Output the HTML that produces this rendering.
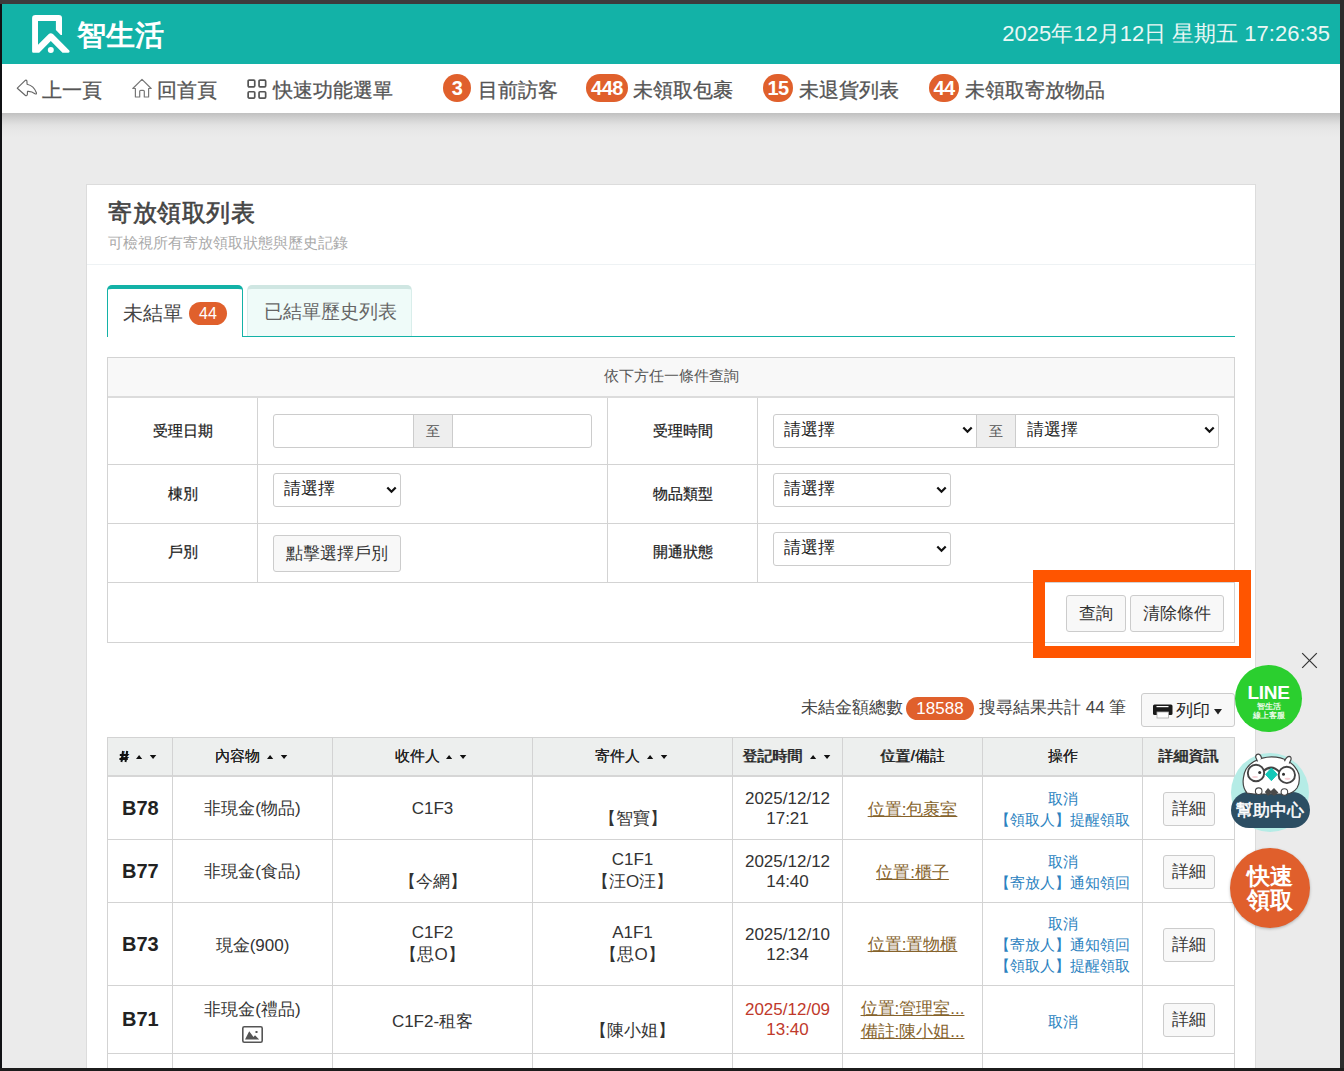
<!DOCTYPE html>
<html><head><meta charset="utf-8">
<style>
*{box-sizing:border-box;margin:0;padding:0}
html,body{width:1344px;height:1071px;overflow:hidden}
body{position:relative;background:#2c2c2c;font-family:"Liberation Sans",sans-serif;color:#333}
.a{position:absolute;white-space:nowrap}
#page{position:absolute;left:2px;top:4px;width:1338px;height:1064px;background:#ebebeb;overflow:hidden}
#hdr{left:2px;top:4px;width:1338px;height:60px;background:#13b2a7}
#nav{left:2px;top:64px;width:1338px;height:49px;background:#fff}
#shadow{left:2px;top:113px;width:1338px;height:24px;background:linear-gradient(#c0c0c0,#cfcfcf 20%,#e2e2e2 50%,#e8e8e8 75%,#ebebeb)}
.navt{font-size:20px;line-height:26px;color:#555;-webkit-text-stroke:0.3px #555}
.badge{background:#e0602c;color:#fff;font-weight:bold;font-size:20px;text-align:center;border-radius:14px;height:28px;line-height:28px;letter-spacing:-0.5px}
#card{left:86px;top:184px;width:1170px;height:900px;background:#fff;border:1px solid #dcdcdc}
.ln{position:absolute;background:#d3d3d3}
.lbl{font-size:15px;color:#222;-webkit-text-stroke:0.25px #222;text-align:center;line-height:20px}
.inp{border:1px solid #ccc;border-radius:3px;background:#fff}
.sel{font-size:17px;color:#222;line-height:20px}
.btn{border:1px solid #ccc;border-radius:3px;background:#f8f8f8;font-size:17px;color:#333;text-align:center}
.th{font-size:15px;font-weight:500;color:#222;line-height:20px;text-align:center}
.td{font-size:17px;color:#333;line-height:20px;text-align:center}
.lnk{font-size:15px;color:#2b82c0;line-height:21px;text-align:center}
.pos{font-size:17px;color:#86632c;text-decoration:underline;line-height:20px;text-align:center}
</style></head><body>
<div id="page"></div>
<div id="hdr" class="a"></div>
<div id="nav" class="a"></div>
<div id="shadow" class="a"></div>

<!-- logo -->
<svg class="a" style="left:28px;top:10px" width="50" height="50" viewBox="0 0 50 50">
<path fill="#fff" d="M4.1 8.2 Q4.1 4.9 7.5 4.9 L30.8 4.9 Q34 4.9 34 7.9 L34 25 L32.7 25 L27.9 20.1 L27.9 11 L10 11 L10 34.8 L20.5 24.3 Q22.8 22.4 25.2 24.3 L41.3 40.6 Q42.2 42.7 40.2 42.7 L34.5 42.7 L22.8 31 L11.2 42.7 L5.3 42.7 Q4.1 42.7 4.1 41.5 Z"/>
<circle cx="22.8" cy="40" r="3" fill="#fff"/>
</svg>
<div class="a" style="left:77px;top:15px;font-size:29px;line-height:40px;color:#fff;font-weight:bold;letter-spacing:0px">智生活</div>
<div class="a" style="right:14px;top:19px;font-size:22px;line-height:30px;color:#eaf7f5">2025年12月12日 星期五 17:26:35</div>


<!-- nav -->
<svg class="a" style="left:14px;top:76px" width="26" height="24" viewBox="0 0 26 24">
<path d="M3.3 12.2 L11 4.6 Q12 3.6 12.9 4.8 L13.1 8.3 Q20 10 22.4 16.8 Q22.8 18.6 21 17.8 Q17.5 15 13.5 15.4 L13.3 18.8 Q12.6 20.3 11.2 19.3 Z" fill="none" stroke="#666" stroke-width="1.15" stroke-linejoin="round"/>
</svg>
<div class="a navt" style="left:42px;top:77px">上一頁</div>
<svg class="a" style="left:130px;top:76px" width="24" height="24" viewBox="0 0 24 24">
<path d="M2.8 12.5 L12 3.3 L21.2 12.5 L18.6 12.5 L18.6 21 L14.3 21 L14.3 15.3 Q14.3 14.3 13.3 14.3 L10.7 14.3 Q9.7 14.3 9.7 15.3 L9.7 21 L5.4 21 L5.4 12.5 Z" fill="none" stroke="#777" stroke-width="1.2" stroke-linejoin="round"/>
</svg>
<div class="a navt" style="left:157px;top:77px">回首頁</div>
<svg class="a" style="left:246px;top:78px" width="22" height="22" viewBox="0 0 22 22">
<rect x="2.15" y="2.15" width="6.6" height="6.7" rx="1" fill="none" stroke="#555" stroke-width="1.7"/>
<rect x="13.05" y="2.15" width="6.6" height="6.7" rx="1" fill="none" stroke="#555" stroke-width="1.7"/>
<rect x="2.15" y="13.75" width="6.6" height="6.3" rx="1" fill="none" stroke="#555" stroke-width="1.7"/>
<rect x="13.05" y="13.75" width="6.6" height="6.3" rx="1" fill="none" stroke="#555" stroke-width="1.7"/>
</svg>
<div class="a navt" style="left:273px;top:77px">快速功能選單</div>
<div class="a badge" style="left:443px;top:74px;width:28px">3</div>
<div class="a navt" style="left:478px;top:77px">目前訪客</div>
<div class="a badge" style="left:586px;top:74px;width:42px">448</div>
<div class="a navt" style="left:633px;top:77px">未領取包裹</div>
<div class="a badge" style="left:763px;top:74px;width:30px">15</div>
<div class="a navt" style="left:799px;top:77px">未退貨列表</div>
<div class="a badge" style="left:929px;top:74px;width:30px">44</div>
<div class="a navt" style="left:965px;top:77px">未領取寄放物品</div>

<!-- card -->
<div id="card" class="a"></div>
<div class="a" style="left:108px;top:198px;font-size:24px;letter-spacing:0.5px;line-height:30px;font-weight:normal;color:#444;-webkit-text-stroke:0.6px #444">寄放領取列表</div>
<div class="a" style="left:108px;top:233px;font-size:15px;line-height:20px;color:#aaa">可檢視所有寄放領取狀態與歷史記錄</div>
<div class="a" style="left:87px;top:264px;width:1168px;height:1px;background:#eef2f4"></div>

<!-- tabs -->
<div class="a" style="left:107px;top:285px;width:136px;height:52px;border:1px solid #13b2a7;border-top:4px solid #13b2a7;border-bottom:none;border-radius:5px 5px 0 0;background:#fff"></div>
<div class="a" style="left:123px;top:301px;font-size:19.5px;line-height:24px;color:#444">未結單</div>
<div class="a" style="left:189px;top:302px;width:38px;height:23px;border-radius:12px;background:#e0602c;color:#fff;font-size:16px;line-height:23px;text-align:center">44</div>
<div class="a" style="left:247px;top:285px;width:165px;height:51px;border:1px solid #d9eeeb;border-top:4px solid #cfe6e2;border-bottom:none;border-radius:5px 5px 0 0;background:#effbf9"></div>
<div class="a" style="left:264px;top:300px;font-size:19px;line-height:24px;color:#666">已結單歷史列表</div>
<div class="a" style="left:242px;top:336px;width:993px;height:1px;background:#13b2a7"></div>

<!-- filter table -->
<div class="a" style="left:107px;top:357px;width:1128px;height:286px;border:1px solid #d3d3d3;background:#fff"></div>
<div class="a" style="left:108px;top:358px;width:1126px;height:39px;background:#f8f8f8"></div>
<div class="ln" style="left:108px;top:396px;width:1126px;height:2px;background:#dcdcdc"></div>
<div class="ln" style="left:108px;top:464px;width:1126px;height:1px"></div>
<div class="ln" style="left:108px;top:523px;width:1126px;height:1px"></div>
<div class="ln" style="left:108px;top:582px;width:1126px;height:1px"></div>
<div class="ln" style="left:257px;top:398px;width:1px;height:184px"></div>
<div class="ln" style="left:607px;top:398px;width:1px;height:184px"></div>
<div class="ln" style="left:757px;top:398px;width:1px;height:184px"></div>
<div class="a" style="left:108px;top:366px;width:1126px;font-size:15px;line-height:20px;color:#555;text-align:center">依下方任一條件查詢</div>

<div class="a lbl" style="left:108px;top:421px;width:149px">受理日期</div>
<div class="a lbl" style="left:108px;top:484px;width:149px">棟別</div>
<div class="a lbl" style="left:108px;top:542px;width:149px">戶別</div>
<div class="a lbl" style="left:608px;top:421px;width:149px">受理時間</div>
<div class="a lbl" style="left:608px;top:484px;width:149px">物品類型</div>
<div class="a lbl" style="left:608px;top:542px;width:149px">開通狀態</div>

<!-- date input group -->
<div class="a inp" style="left:273px;top:414px;width:319px;height:34px"></div>
<div class="a" style="left:413px;top:415px;width:40px;height:32px;background:#eee;border-left:1px solid #ccc;border-right:1px solid #ccc;font-size:14px;line-height:32px;text-align:center;color:#555">至</div>

<!-- time select group -->
<div class="a inp" style="left:773px;top:414px;width:446px;height:34px"></div>
<div class="a" style="left:976px;top:415px;width:40px;height:32px;background:#eee;border-left:1px solid #ccc;border-right:1px solid #ccc;font-size:14px;line-height:32px;text-align:center;color:#555">至</div>
<div class="a sel" style="left:784px;top:420px">請選擇</div>
<svg class="a" style="left:962px;top:426px" width="11" height="8" viewBox="0 0 11 8"><path d="M1.3 1.5 L5.5 5.8 L9.7 1.5" fill="none" stroke="#111" stroke-width="2.2"/></svg>
<div class="a sel" style="left:1027px;top:420px">請選擇</div>
<svg class="a" style="left:1204px;top:426px" width="11" height="8" viewBox="0 0 11 8"><path d="M1.3 1.5 L5.5 5.8 L9.7 1.5" fill="none" stroke="#111" stroke-width="2.2"/></svg>

<div class="a inp" style="left:273px;top:473px;width:128px;height:34px"></div>
<div class="a sel" style="left:284px;top:479px">請選擇</div>
<svg class="a" style="left:386px;top:486px" width="11" height="8" viewBox="0 0 11 8"><path d="M1.3 1.5 L5.5 5.8 L9.7 1.5" fill="none" stroke="#111" stroke-width="2.2"/></svg>
<div class="a btn" style="left:273px;top:535px;width:128px;height:37px;line-height:35px">點擊選擇戶別</div>

<div class="a inp" style="left:773px;top:473px;width:178px;height:34px"></div>
<div class="a sel" style="left:784px;top:479px">請選擇</div>
<svg class="a" style="left:936px;top:486px" width="11" height="8" viewBox="0 0 11 8"><path d="M1.3 1.5 L5.5 5.8 L9.7 1.5" fill="none" stroke="#111" stroke-width="2.2"/></svg>
<div class="a inp" style="left:773px;top:532px;width:178px;height:34px"></div>
<div class="a sel" style="left:784px;top:538px">請選擇</div>
<svg class="a" style="left:936px;top:545px" width="11" height="8" viewBox="0 0 11 8"><path d="M1.3 1.5 L5.5 5.8 L9.7 1.5" fill="none" stroke="#111" stroke-width="2.2"/></svg>

<div class="a btn" style="left:1066px;top:595px;width:60px;height:37px;line-height:35px">查詢</div>
<div class="a btn" style="left:1130px;top:595px;width:94px;height:37px;line-height:35px">清除條件</div>
<div class="a" style="left:1033px;top:570px;width:218px;height:88px;border:12px solid #ff5500"></div>

<!-- summary -->
<div class="a" style="left:801px;top:697px;font-size:17px;line-height:22px;color:#444">未結金額總數</div>
<div class="a" style="left:906px;top:697px;width:68px;height:23px;border-radius:12px;background:#e0602c;color:#fff;font-size:17px;line-height:23px;text-align:center">18588</div>
<div class="a" style="left:979px;top:697px;font-size:17px;line-height:22px;color:#444">搜尋結果共計 44 筆</div>
<div class="a btn" style="left:1141px;top:693px;width:94px;height:34px"></div>
<svg class="a" style="left:1152px;top:703px" width="22" height="16" viewBox="0 0 22 16">
<rect x="1" y="1.6" width="19.5" height="10.5" rx="1.5" fill="#1a1a1a"/>
<rect x="4.5" y="3" width="12" height="1.2" fill="#fff"/>
<rect x="5" y="9" width="11.5" height="6" fill="#fff" stroke="#aaa" stroke-width="0.8"/>
</svg>
<div class="a" style="left:1176px;top:700px;font-size:17px;line-height:22px;color:#222">列印</div>
<svg class="a" style="left:1213px;top:708px" width="10" height="8" viewBox="0 0 10 8"><path d="M1 1 L9 1 L5 6.5 Z" fill="#222"/></svg>

<!-- data table -->
<div class="a" style="left:107px;top:737px;width:1128px;height:400px;border:1px solid #d3d3d3;background:#fff"></div>
<div class="a" style="left:108px;top:738px;width:1126px;height:38px;background:#edefee"></div>
<div class="ln" style="left:108px;top:775px;width:1126px;height:2px;background:#d6d6d6"></div>
<div class="ln" style="left:108px;top:839px;width:1126px;height:1px"></div>
<div class="ln" style="left:108px;top:902px;width:1126px;height:1px"></div>
<div class="ln" style="left:108px;top:985px;width:1126px;height:1px"></div>
<div class="ln" style="left:108px;top:1053px;width:1126px;height:1px"></div>
<div class="ln" style="left:172px;top:738px;width:1px;height:340px"></div>
<div class="ln" style="left:332px;top:738px;width:1px;height:340px"></div>
<div class="ln" style="left:532px;top:738px;width:1px;height:340px"></div>
<div class="ln" style="left:732px;top:738px;width:1px;height:340px"></div>
<div class="ln" style="left:842px;top:738px;width:1px;height:340px"></div>
<div class="ln" style="left:982px;top:738px;width:1px;height:340px"></div>
<div class="ln" style="left:1142px;top:738px;width:1px;height:340px"></div>
<div class="a th" style="left:108px;top:746px;width:64px">#<span style='display:inline-block;width:30px'></span></div>
<div class="a th" style="left:173px;top:746px;width:159px">內容物<span style='display:inline-block;width:30px'></span></div>
<div class="a th" style="left:333px;top:746px;width:199px">收件人<span style='display:inline-block;width:30px'></span></div>
<div class="a th" style="left:533px;top:746px;width:199px">寄件人<span style='display:inline-block;width:30px'></span></div>
<div class="a th" style="left:733px;top:746px;width:109px">登記時間<span style='display:inline-block;width:30px'></span></div>
<div class="a th" style="left:843px;top:746px;width:139px">位置/備註</div>
<div class="a th" style="left:983px;top:746px;width:159px">操作</div>
<div class="a th" style="left:1143px;top:746px;width:91px">詳細資訊</div>
<svg class="a" style="left:119px;top:750px" width="10" height="13" viewBox="0 0 10 13"><path d="M4 1 L2.4 12 M8.1 1 L6.5 12 M0.8 5 L9.2 5 M0.4 9 L8.8 9" stroke="#111" stroke-width="1.9"/></svg>
<div class="a th" style="left:215px;top:746px">內容物</div>
<div class="a th" style="left:395px;top:746px">收件人</div>
<div class="a th" style="left:595px;top:746px">寄件人</div>
<div class="a th" style="left:742px;top:746px">登記時間</div>
<div class="a th" style="left:881px;top:746px">位置/備註</div>
<div class="a th" style="left:1048px;top:746px">操作</div>
<div class="a th" style="left:1158px;top:746px">詳細資訊</div>
<svg class="a" style="left:135.5px;top:754px" width="22" height="7" viewBox="0 0 22 7"><path d="M0 5 L3.1 1 L6.2 5 Z M13.8 1 L20.3 1 L17.05 5 Z" fill="#111"/></svg>
<svg class="a" style="left:267px;top:754px" width="22" height="7" viewBox="0 0 22 7"><path d="M0 5 L3.1 1 L6.2 5 Z M13.8 1 L20.3 1 L17.05 5 Z" fill="#111"/></svg>
<svg class="a" style="left:446px;top:754px" width="22" height="7" viewBox="0 0 22 7"><path d="M0 5 L3.1 1 L6.2 5 Z M13.8 1 L20.3 1 L17.05 5 Z" fill="#111"/></svg>
<svg class="a" style="left:646.5px;top:754px" width="22" height="7" viewBox="0 0 22 7"><path d="M0 5 L3.1 1 L6.2 5 Z M13.8 1 L20.3 1 L17.05 5 Z" fill="#111"/></svg>
<svg class="a" style="left:809.5px;top:754px" width="22" height="7" viewBox="0 0 22 7"><path d="M0 5 L3.1 1 L6.2 5 Z M13.8 1 L20.3 1 L17.05 5 Z" fill="#111"/></svg>
<div class="a" style="left:122px;top:795.5px;font-size:20px;line-height:24px;font-weight:bold;color:#222">B78</div>
<div class="a td" style="left:173px;top:799px;width:159px;">非現金(物品)</div>
<div class="a td" style="left:333px;top:799px;width:199px;">C1F3</div>
<div class="a td" style="left:533px;top:789px;width:199px;">&nbsp;<br>【智寶】</div>
<div class="a td" style="left:733px;top:789px;width:109px;">2025/12/12<br>17:21</div>
<div class="a pos" style="left:843px;top:800px;width:139px;">位置:包裹室</div>
<div class="a lnk" style="left:983px;top:788.4px;width:159px;">取消<br>【領取人】提醒領取</div>
<div class="a btn" style="left:1163px;top:791.5px;width:52px;height:34px;line-height:32px">詳細</div>
<div class="a" style="left:122px;top:858.5px;font-size:20px;line-height:24px;font-weight:bold;color:#222">B77</div>
<div class="a td" style="left:173px;top:862px;width:159px;">非現金(食品)</div>
<div class="a td" style="left:333px;top:852px;width:199px;">&nbsp;<br>【今網】</div>
<div class="a td" style="left:533px;top:848.5px;width:199px;line-height:22px">C1F1<br>【汪O汪】</div>
<div class="a td" style="left:733px;top:852px;width:109px;">2025/12/12<br>14:40</div>
<div class="a pos" style="left:843px;top:863px;width:139px;">位置:櫃子</div>
<div class="a lnk" style="left:983px;top:851.4px;width:159px;">取消<br>【寄放人】通知領回</div>
<div class="a btn" style="left:1163px;top:854.5px;width:52px;height:34px;line-height:32px">詳細</div>
<div class="a" style="left:122px;top:931.5px;font-size:20px;line-height:24px;font-weight:bold;color:#222">B73</div>
<div class="a td" style="left:173px;top:935.5px;width:159px;">現金(900)</div>
<div class="a td" style="left:333px;top:921.5px;width:199px;line-height:22px">C1F2<br>【思O】</div>
<div class="a td" style="left:533px;top:921.5px;width:199px;line-height:22px">A1F1<br>【思O】</div>
<div class="a td" style="left:733px;top:925px;width:109px;">2025/12/10<br>12:34</div>
<div class="a pos" style="left:843px;top:935px;width:139px;">位置:置物櫃</div>
<div class="a lnk" style="left:983px;top:913px;width:159px;">取消<br>【寄放人】通知領回<br>【領取人】提醒領取</div>
<div class="a btn" style="left:1163px;top:927.5px;width:52px;height:34px;line-height:32px">詳細</div>
<div class="a" style="left:122px;top:1007px;font-size:20px;line-height:24px;font-weight:bold;color:#222">B71</div>
<div class="a td" style="left:173px;top:1000px;width:159px;">非現金(禮品)</div>
<svg class="a" style="left:242px;top:1026px" width="21" height="17" viewBox="0 0 21 17"><rect x="0.8" y="0.8" width="19.4" height="15.4" rx="1.5" fill="#fff" stroke="#555" stroke-width="1.6"/><path d="M3 13.6 L7.2 5.2 L11.5 11 L13 9.3 L17.2 13.6 Z" fill="#555"/><rect x="13.5" y="5" width="2" height="2" fill="#555"/></svg>
<div class="a td" style="left:333px;top:1012px;width:199px;">C1F2-租客</div>
<div class="a td" style="left:533px;top:1000.5px;width:199px;">&nbsp;<br>【陳小姐】</div>
<div class="a td" style="left:733px;top:1000px;width:109px;color:#c0392b">2025/12/09<br>13:40</div>
<div class="a pos" style="left:843px;top:996.5px;width:139px;"><div style="line-height:23px">位置:管理室...<br>備註:陳小姐...</div></div>
<div class="a lnk" style="left:983px;top:1011.4px;width:159px;">取消</div>
<div class="a btn" style="left:1163px;top:1002.5px;width:52px;height:34px;line-height:32px">詳細</div>

<!-- floating widgets -->
<svg class="a" style="left:1300px;top:651px" width="19" height="19" viewBox="0 0 19 19"><path d="M2.2 2.2 L16.8 16.8 M16.8 2.2 L2.2 16.8" stroke="#333" stroke-width="1.2"/></svg>
<div class="a" style="left:1235px;top:665px;width:67px;height:67px;border-radius:50%;background:#2bcf2f"></div>
<div class="a" style="left:1235px;top:681px;width:67px;text-align:center;font-size:19px;line-height:24px;font-weight:bold;color:#fff;letter-spacing:-0.3px">LINE</div>
<div class="a" style="left:1235px;top:702px;width:67px;text-align:center;font-size:8px;line-height:9px;color:#e8fbe8;font-weight:bold">智生活<br>線上客服</div>

<div class="a" style="left:1231px;top:753px;width:78px;height:79px;border-radius:50%;background:#b5ece6"></div>

<div class="a" style="left:1230.5px;top:792px;width:79px;height:36px;border-radius:18px;background:#2c4e63"></div>
<svg class="a" style="left:1230px;top:752px" width="80" height="46" viewBox="0 0 80 46">
<path d="M17 41 Q12 35 13.4 26 Q14.5 15 24 9.5 Q32 5 41.5 4.8 Q51 4.8 58 9 Q66 14 68.8 22 Q70.5 30 67 36 Q63 41.5 56 42 L24 42 Z" fill="#fff" stroke="#444" stroke-width="1.2"/>
<path d="M27.5 9.6 L25.6 5 Q26 2 28.6 2.2 Q31 2.6 31.6 6.8" fill="#fff" stroke="#444" stroke-width="1.2"/>
<path d="M54.5 9.2 Q56 5 59 4.3 Q61.6 4.5 61 7.5 L59.2 11.5" fill="#fff" stroke="#444" stroke-width="1.2"/>
<path d="M33 19.5 Q41.4 11.5 49.5 20" fill="none" stroke="#444" stroke-width="1.9"/>
<circle cx="26" cy="21" r="8.2" fill="#fff" stroke="#444" stroke-width="1.9"/>
<circle cx="56.8" cy="22.9" r="8.2" fill="#fff" stroke="#444" stroke-width="1.9"/>
<path d="M41.4 16 L47.2 22.4 L41.4 28.7 L35.6 22.4 Z" fill="#14c8b8" stroke="#14c8b8" stroke-width="1" stroke-linejoin="round"/>
<circle cx="29.7" cy="20.5" r="1.5" fill="#333"/>
<circle cx="53.5" cy="22.3" r="1.5" fill="#333"/>
<ellipse cx="25" cy="25" rx="3" ry="1.1" fill="#f7cfd5"/>
<ellipse cx="57.5" cy="26.8" rx="3" ry="1.1" fill="#f7cfd5"/>
<path d="M34.8 40 L38 36 L40.9 39 L44 36 L48.4 40.5 L44 44 L40.9 41.5 L38 44 Z" fill="#4a4a4a"/>
<circle cx="28.7" cy="39.2" r="3.3" fill="#fff" stroke="#444" stroke-width="1.1"/>
<circle cx="54.4" cy="40.1" r="3.3" fill="#fff" stroke="#444" stroke-width="1.1"/>
</svg>
<div class="a" style="left:1230px;top:799px;width:80px;text-align:center;font-size:17px;line-height:24px;color:#fff;font-weight:normal;-webkit-text-stroke:0.5px #fff">幫助中心</div>

<div class="a" style="left:1230px;top:848px;width:80px;height:80px;border-radius:50%;background:#e05f2c;box-shadow:0 1px 3px rgba(0,0,0,.25)"></div>
<div class="a" style="left:1230px;top:864px;width:80px;text-align:center;font-size:23px;line-height:24px;color:#fff;font-weight:bold">快速<br>領取</div>

<div class="a" style="left:0;top:0;width:2px;height:1071px;background:#101114;z-index:10"></div>
<div class="a" style="left:0;top:0;width:1344px;height:4px;background:#3d3b3c;z-index:10"></div>
<div class="a" style="left:1340px;top:0;width:4px;height:1071px;background:#2c2c2c;z-index:10"></div>
<div class="a" style="left:0;top:1068px;width:1344px;height:3px;background:#1c1c1c;z-index:10"></div>
</body></html>
